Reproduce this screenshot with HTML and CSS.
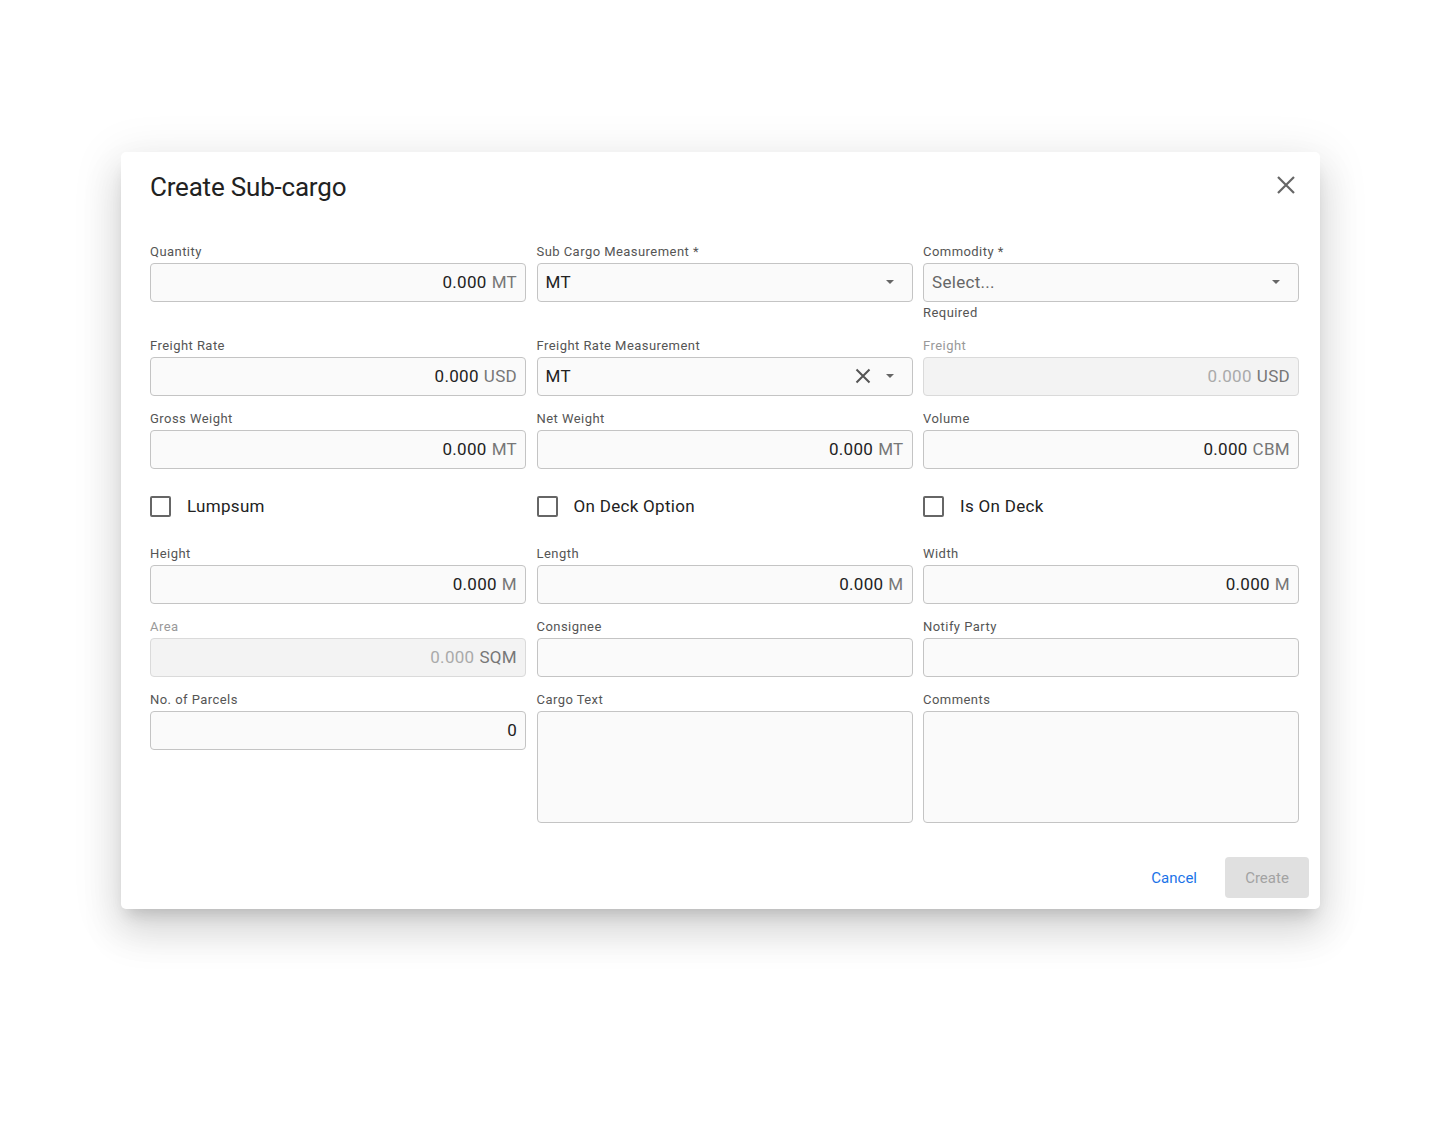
FILE: index.html
```html
<!DOCTYPE html>
<html lang="en">
<head>
  <meta charset="UTF-8">
  <title>Create Sub-cargo</title>
  <link rel="stylesheet" href="styles.css">
</head>
<body>

  <!-- Dialog -->
  <div class="dialog">

    <div class="dialog-header">
      <h1 class="dialog-title">Create Sub-cargo</h1>
      <button class="close-btn" aria-label="Close">
        <svg width="18" height="18" viewBox="0 0 18 18"><path d="M1 1 L17 17 M17 1 L1 17" stroke="#666" stroke-width="2.2" fill="none"/></svg>
      </button>
    </div>

    <div class="form-grid">

      <!-- Row 1 -->
      <div class="field">
        <div class="label">Quantity</div>
        <div class="box num"><span class="val">0.000</span><span class="unit">MT</span></div>
      </div>
      <div class="field">
        <div class="label">Sub Cargo Measurement *</div>
        <div class="box select"><span class="val">MT</span><span class="caret"></span></div>
      </div>
      <div class="field">
        <div class="label">Commodity *</div>
        <div class="box select"><span class="placeholder">Select...</span><span class="caret"></span></div>
        <div class="helper">Required</div>
      </div>

      <!-- Row 2 -->
      <div class="field">
        <div class="label">Freight Rate</div>
        <div class="box num"><span class="val">0.000</span><span class="unit">USD</span></div>
      </div>
      <div class="field">
        <div class="label">Freight Rate Measurement</div>
        <div class="box select">
          <span class="val">MT</span>
          <span class="clear">
            <svg width="16" height="16" viewBox="0 0 16 16"><path d="M1.5 1.5 L14.5 14.5 M14.5 1.5 L1.5 14.5" stroke="#555" stroke-width="2" fill="none"/></svg>
          </span>
          <span class="caret"></span>
        </div>
      </div>
      <div class="field disabled">
        <div class="label">Freight</div>
        <div class="box num"><span class="val">0.000</span><span class="unit">USD</span></div>
      </div>

      <!-- Row 3 -->
      <div class="field">
        <div class="label">Gross Weight</div>
        <div class="box num"><span class="val">0.000</span><span class="unit">MT</span></div>
      </div>
      <div class="field">
        <div class="label">Net Weight</div>
        <div class="box num"><span class="val">0.000</span><span class="unit">MT</span></div>
      </div>
      <div class="field">
        <div class="label">Volume</div>
        <div class="box num"><span class="val">0.000</span><span class="unit">CBM</span></div>
      </div>

      <!-- Checkboxes -->
      <label class="check"><span class="check-box"></span>Lumpsum</label>
      <label class="check"><span class="check-box"></span>On Deck Option</label>
      <label class="check"><span class="check-box"></span>Is On Deck</label>

      <!-- Row 4 -->
      <div class="field">
        <div class="label">Height</div>
        <div class="box num"><span class="val">0.000</span><span class="unit">M</span></div>
      </div>
      <div class="field">
        <div class="label">Length</div>
        <div class="box num"><span class="val">0.000</span><span class="unit">M</span></div>
      </div>
      <div class="field">
        <div class="label">Width</div>
        <div class="box num"><span class="val">0.000</span><span class="unit">M</span></div>
      </div>

      <!-- Row 5 -->
      <div class="field disabled">
        <div class="label">Area</div>
        <div class="box num"><span class="val">0.000</span><span class="unit">SQM</span></div>
      </div>
      <div class="field">
        <div class="label">Consignee</div>
        <div class="box"></div>
      </div>
      <div class="field">
        <div class="label">Notify Party</div>
        <div class="box"></div>
      </div>

      <!-- Row 6 -->
      <div class="field">
        <div class="label">No. of Parcels</div>
        <div class="box num"><span class="val">0</span></div>
      </div>
      <div class="field">
        <div class="label">Cargo Text</div>
        <div class="box textarea"></div>
      </div>
      <div class="field">
        <div class="label">Comments</div>
        <div class="box textarea"></div>
      </div>

    </div>

    <div class="dialog-footer">
      <button class="btn-text">Cancel</button>
      <button class="btn-primary" disabled>Create</button>
    </div>

  </div>

</body>
</html>
```

FILE: styles.css
```css
/* Global */
body {
  margin: 0;
  padding: 0 0 220px;
  background-color: #fff;
  font-family: Roboto, "Liberation Sans", Arial, sans-serif;
  color: #222;
}

/* Dialog */
.dialog {
  width: 1199px;
  margin: 152px auto 0;
  background-color: #fff;
  border-radius: 5px;
  box-shadow: 0 11px 15px -7px rgba(0, 0, 0, 0.16),
              0 24px 38px 3px rgba(0, 0, 0, 0.1),
              0 9px 46px 8px rgba(0, 0, 0, 0.08);
  padding: 0 0 11px 0;
}

.dialog-header {
  display: flex;
  justify-content: space-between;
  align-items: center;
  padding: 19px 22px 0 29px;
  height: 32px;
}

.dialog-title {
  margin: 0;
  font-size: 26px;
  font-weight: 400;
  line-height: 32px;
  color: #222;
  letter-spacing: -0.2px;
}

.close-btn {
  background: none;
  border: none;
  padding: 0;
  width: 24px;
  height: 24px;
  display: flex;
  align-items: center;
  justify-content: center;
  cursor: pointer;
  margin-top: -4px;
}

/* Form grid */
.form-grid {
  display: grid;
  grid-template-columns: repeat(3, 1fr);
  column-gap: 10.5px;
  row-gap: 15px;
  padding: 41px 21px 0 29px;
  align-items: start;
}

.field .label {
  font-size: 13px;
  line-height: 16px;
  color: #555;
  margin-bottom: 3px;
  letter-spacing: 0.45px;
}

.field .helper {
  font-size: 13px;
  line-height: 16px;
  color: #555;
  margin-top: 3px;
  margin-bottom: 2px;
  letter-spacing: 0.45px;
}

.box {
  box-sizing: border-box;
  height: 39px;
  border: 1px solid #c4c4c4;
  border-radius: 4px;
  background-color: #fafafa;
  display: flex;
  align-items: center;
  padding: 0 8px 2px;
  font-size: 17px;
  letter-spacing: 0.3px;
}

.box.num {
  justify-content: flex-end;
}

.box .val {
  color: #222;
}

.box .unit {
  color: #777;
  margin-left: 5px;
}

.box .placeholder {
  color: #666;
  letter-spacing: 0.3px;
}

.box.select {
  padding-right: 18px;
}

.box.select .val,
.box.select .placeholder {
  flex: 1;
}

.caret {
  width: 0;
  height: 0;
  border-left: 4.5px solid transparent;
  border-right: 4.5px solid transparent;
  border-top: 4.5px solid #666;
}

.clear {
  display: flex;
  align-items: center;
  margin-right: 15px;
}

.box.textarea {
  height: 112px;
}

/* Disabled fields */
.field.disabled .label {
  color: #999;
}

.field.disabled .box {
  background-color: #f3f3f3;
  border-color: #dadada;
}

.field.disabled .val {
  color: #aaa;
}

.field.disabled .unit {
  color: #777;
}

/* Checkboxes */
.check {
  display: flex;
  align-items: center;
  height: 44px;
  padding-bottom: 3px;
  font-size: 17px;
  color: #222;
  letter-spacing: 0.3px;
  cursor: pointer;
}

.check-box {
  box-sizing: border-box;
  width: 21px;
  height: 21px;
  border: 2px solid #666;
  border-radius: 2px;
  margin-right: 16px;
}

/* Footer */
.dialog-footer {
  display: flex;
  justify-content: flex-end;
  align-items: center;
  padding: 34px 11px 0 0;
}

.btn-text {
  background: none;
  border: none;
  color: #1a73e8;
  font-family: inherit;
  font-size: 15px;
  padding: 0 8px;
  margin-right: 20px;
  height: 40px;
  cursor: pointer;
}

.btn-primary {
  background-color: #e0e0e0;
  color: #a3a3a3;
  border: none;
  border-radius: 4px;
  font-family: inherit;
  font-size: 15px;
  height: 41px;
  width: 84px;
}
```
